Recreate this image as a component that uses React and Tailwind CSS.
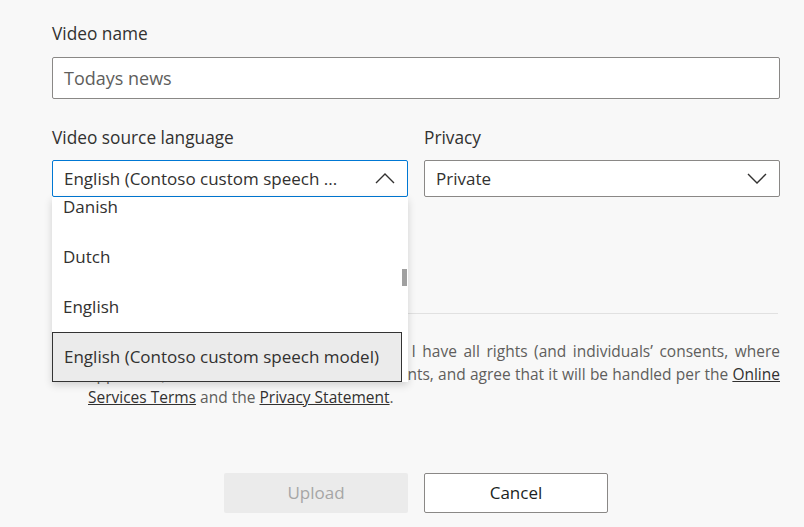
import React from 'react';

const Chevron = ({ up }) => (
  <svg width="20" height="11" viewBox="0 0 20 11" fill="none" stroke="#323130" strokeWidth="1.4">
    {up ? <polyline points="1,10 10,1 19,10" /> : <polyline points="1,1 10,10 19,1" />}
  </svg>
);

const languages = ['Danish', 'Dutch', 'English', 'English (Contoso custom speech model)'];

const App = () => {
  return (
    <div className="min-h-screen w-full bg-[#f8f8f8] font-['Open_Sans',sans-serif] text-[#323130]">
      <div className="pl-[52px] pr-[24px] pt-[22px]">
        {/* Video name */}
        <div className="text-[17.3px] leading-[24px]">Video name</div>
        <div className="mt-[11px] h-[42px] bg-white border border-[#8a8886] rounded-[2px] flex items-center px-[11px]">
          <span className="text-[18px] text-[#605e5c]">Todays news</span>
        </div>

        {/* Language + privacy */}
        <div className="grid grid-cols-2 gap-[16px] mt-[27px]">
          <div className="relative">
            <div className="text-[17.3px] leading-[24px]">Video source language</div>
            <div className="mt-[10px] h-[37px] bg-white border border-[#0078d4] rounded-[2px] flex items-center justify-between pl-[11px] pr-[12px]">
              <span className="text-[17px] truncate">English (Contoso custom speech ...</span>
              <Chevron up />
            </div>

            {/* open list */}
            <div className="absolute left-0 right-0 top-[71px] z-10 h-[185px] bg-white shadow-[0_3px_8px_rgba(0,0,0,0.16)] flex overflow-hidden">
              <div className="flex-1 -mt-[15px]">
                {languages.map((l, i) => (
                  <div
                    key={l}
                    className={`h-[50px] flex items-center pl-[11px] text-[17px] whitespace-nowrap ${i === languages.length - 1 ? 'bg-[#ebebeb] border-[1.5px] border-[#333]' : ''}`}
                  >
                    {l}
                  </div>
                ))}
              </div>
              <div className="w-[6px] relative">
                <div className="absolute left-0 w-[5px] top-[72px] h-[17px] bg-[#a0a0a0]"></div>
              </div>
            </div>
          </div>

          <div>
            <div className="text-[17.3px] leading-[24px]">Privacy</div>
            <div className="mt-[10px] h-[37px] bg-white border border-[#8a8886] rounded-[2px] flex items-center justify-between pl-[11px] pr-[12px]">
              <span className="text-[17px]">Private</span>
              <Chevron />
            </div>
          </div>
        </div>

        <div className="h-[116px]"></div>
        <div className="h-px bg-[#e1e1e1] mr-[2px]"></div>

        {/* Consent */}
        <div className="mt-[26px] flex gap-[16px]">
          <div className="w-[20px] h-[20px] border border-[#323130] rounded-[2px] bg-white mt-[2px]"></div>
          <div className="flex-1 text-[15.5px] leading-[23px] text-[#605e5c] text-justify">
            <span className="block [text-align-last:justify]">By checking this box, I hereby certify that: I have all rights (and individuals’ consents, where</span>
            <span className="block [text-align-last:justify]">applicable) to use and to store the file/contents, and agree that it will be handled per the <a className="underline text-[#323130]">Online</a></span>
            <span className="block"><a className="underline text-[#323130]">Services Terms</a> and the <a className="underline text-[#323130]">Privacy Statement</a>.</span>
          </div>
        </div>

        {/* Buttons */}
        <div className="mt-[64px] flex justify-center gap-[16px]">
          <button className="w-[184px] h-[40px] bg-[#ebebeb] text-[#a6a6a6] rounded-[2px] text-[17px]">Upload</button>
          <button className="w-[184px] h-[40px] bg-white border border-[#8a8886] text-[#201f1e] rounded-[2px] text-[17px]">Cancel</button>
        </div>
      </div>
    </div>
  );
};

export default App;
